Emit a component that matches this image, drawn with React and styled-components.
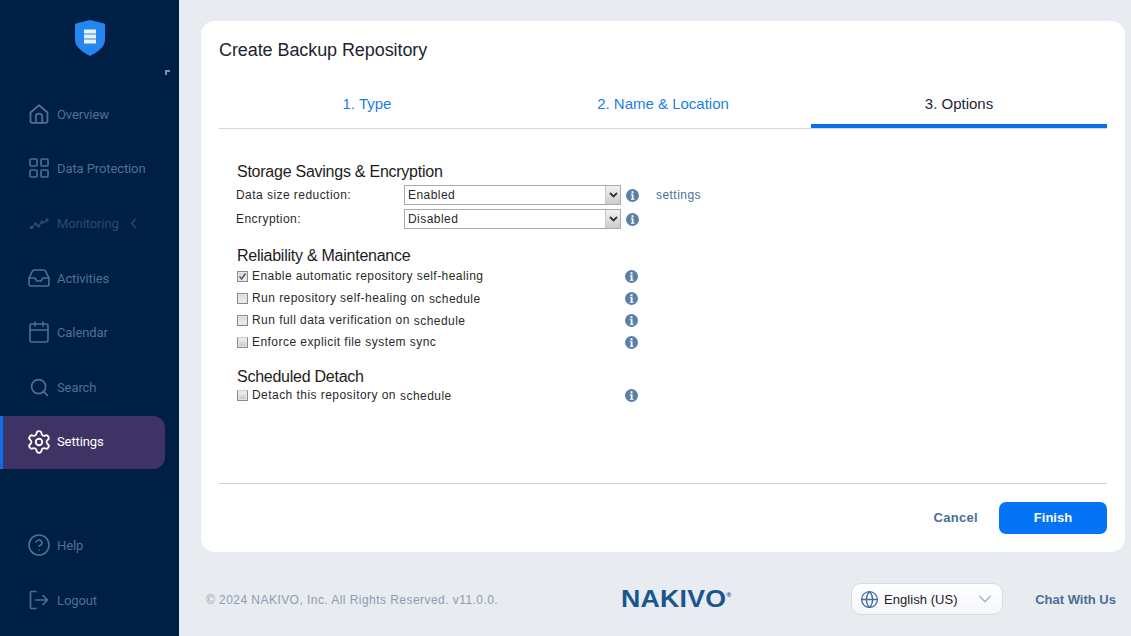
import React from 'react';
import styled, { createGlobalStyle } from 'styled-components';
import { LayoutGrid, Inbox, Calendar, Search, Settings, CircleHelp, Globe, ChevronDown, ChevronLeft } from 'lucide-react';

const GlobalStyle = createGlobalStyle`
  html, body { margin: 0; padding: 0; height: 100%; overflow: hidden; }
  body { background: #e8ebf0; font-family: "Liberation Sans", Arial, sans-serif; }
`;

const Page = styled.div`
  display: flex;
  width: 1131px;
  height: 636px;
`;

const Sidebar = styled.aside`
  display: flex;
  flex-direction: column;
  width: 179px;
  flex: none;
  background: #001f45;
  font-family: Roboto, "Liberation Sans", sans-serif;
`;

const LogoBox = styled.div`
  display: flex;
  flex-direction: column;
  height: 87px;
  padding-top: 20px;
  box-sizing: border-box;
  align-items: center;
  position: relative;
`;

const CollapseMark = styled.span`
  position: absolute;
  left: 165px;
  top: 70px;
  width: 5px;
  height: 5px;
  border-top: 2px solid #7f8fa6;
  border-left: 2px solid #7f8fa6;
  box-sizing: border-box;
`;

const NavList = styled.nav`
  display: flex;
  flex-direction: column;
  width: 165px;
`;

const NavItem = styled.a`
  display: flex;
  align-items: center;
  gap: 8px;
  height: ${p => p.$h || 54}px;
  padding-left: ${p => (p.$active ? '26px' : '29px')};
  color: ${p => (p.$active ? '#ffffff' : p.$dim ? '#2b4a72' : '#4f6f98')};
  font-size: 13px;
  letter-spacing: -0.1px;
  box-sizing: border-box;
  ${p => p.$active && `
    background: #3f3366;
    border-left: 3px solid #0b6fe8;
    border-radius: 0 12px 12px 0;
    height: 53px;
    margin: 1px 0 0;
    padding-bottom: 2px;
  `}
`;

const IconSlot = styled.span`
  display: flex;
  width: 20px;
  height: 20px;
  align-items: center;
  justify-content: center;
  flex: none;
  svg { flex: none; }
`;

const MonitoringChevron = styled(ChevronLeft)`
  margin-left: -2px;
`;

const NavSpacer = styled.div`
  height: 49px;
`;

const Main = styled.main`
  display: flex;
  flex-direction: column;
  flex: 1;
  padding: 21px 6px 0 22px;
  min-width: 0;
`;

const Card = styled.section`
  display: flex;
  flex-direction: column;
  height: 531px;
  padding: 0 18px;
  background: #ffffff;
  border-radius: 14px;
  box-sizing: border-box;
`;

const Title = styled.h1`
  margin: 18px 0 0;
  font-size: 18px;
  line-height: 22px;
  font-weight: 400;
  letter-spacing: -0.08px;
  color: #1d2530;
`;

const Tabs = styled.div`
  display: grid;
  grid-template-columns: repeat(3, 1fr);
  margin-top: 16px;
  height: 51px;
  border-bottom: 1px solid #d3d6da;
`;

const Tab = styled.div`
  display: flex;
  align-items: center;
  justify-content: center;
  height: 50px;
  padding-top: 2px;
  box-sizing: border-box;
  font-size: 15px;
  color: ${p => (p.$active ? '#222a35' : '#1b7fe3')};
  ${p => p.$active && 'border-bottom: 4px solid #0b70e6; height: 51px; padding-top: 5px;'}
`;

const Body = styled.div`
  display: flex;
  flex-direction: column;
  flex: 1;
  padding: 34px 0 0 17px;
`;

const Heading = styled.h2`
  margin: ${p => p.$gap || 0}px 0 0 1px;
  font-size: 16px;
  line-height: 18px;
  font-weight: 400;
  letter-spacing: -0.25px;
  color: #1c1c1c;
`;

const FieldGroup = styled.div`
  display: flex;
  flex-direction: column;
  margin-top: 2px;
`;

const FieldRow = styled.div`
  display: flex;
  align-items: center;
  height: 24px;
  font-size: 12px;
  letter-spacing: 0.45px;
  color: #2a2a2a;
`;

const FieldLabel = styled.span`
  width: 168px;
  flex: none;
`;

const FakeSelect = styled.div`
  display: flex;
  align-items: center;
  justify-content: space-between;
  width: 217px;
  height: 20px;
  flex: none;
  box-sizing: border-box;
  border: 1px solid #ababab;
  padding-left: 3px;
  background: #fff;
`;

const SelectArrow = styled.span`
  display: flex;
  align-items: center;
  justify-content: center;
  width: 14px;
  height: 18px;
  background: linear-gradient(#f2f2f2, #cdcdcd);
  border-left: 1px solid #c8c8c8;
`;

const InfoMark = styled.svg`
  width: 13px;
  height: 13px;
  flex: none;
  margin-left: ${p => p.$left || 0}px;
`;

const LinkText = styled.a`
  margin-left: 17px;
  color: #4a6f9c;
`;

const CheckRow = styled.div`
  display: grid;
  grid-template-columns: 389px auto;
  align-items: center;
  height: 22px;
  margin-top: ${p => (p.$tight ? '-2px' : '0')};
  font-size: 12px;
  letter-spacing: 0.45px;
  color: #2a2a2a;
`;

const CheckLabel = styled.span`
  display: flex;
  align-items: center;
  gap: 4px;
`;

const Box = styled.span`
  display: flex;
  align-items: center;
  justify-content: center;
  width: 11px;
  height: 11px;
  margin-left: 1px;
  box-sizing: border-box;
  border: 1px solid #8b8b8b;
  border-top-color: ${p => (p.$faded ? '#d4d4d4' : '#8b8b8b')};
  background: ${p => (p.$faded ? 'linear-gradient(#f4f4f4, #c4c4c4)' : 'linear-gradient(#d8d8d8, #f1f1f1)')};
  box-shadow: inset 0 0 0 1px #e6e6e6;
  flex: none;
`;

const ScheduleWord = styled.span`
  display: inline-block;
  margin-left: 4px;
  vertical-align: -1px;
`;

const Actions = styled.div`
  display: flex;
  align-items: flex-start;
  justify-content: flex-end;
  gap: 21px;
  height: 50px;
  border-top: 1px solid #cfd2d6;
  padding-top: 18px;
`;

const CancelLink = styled.a`
  margin-top: 8px;
  font-size: 13px;
  font-weight: 700;
  color: #4a6f9c;
  letter-spacing: 0.3px;
`;

const FinishButton = styled.button`
  width: 108px;
  height: 32px;
  border: 0;
  border-radius: 7px;
  padding: 0 0 2px;
  background: #0473f5;
  color: #fff;
  font: 700 13px "Liberation Sans", sans-serif;
`;

const Footer = styled.footer`
  display: flex;
  align-items: center;
  height: 84px;
  padding: 10px 9px 0 5px;
  box-sizing: border-box;
  font-size: 12px;
`;

const Copyright = styled.span`
  width: 415px;
  flex: none;
  margin-top: 2px;
  color: #8d9db2;
  letter-spacing: 0.45px;
`;

const Brand = styled.span`
  display: block;
  width: 230px;
  flex: none;
  font-size: 23px;
  font-weight: 700;
  color: #17568f;
  letter-spacing: 0.2px;
  transform: scaleX(1.16);
  transform-origin: left center;
  white-space: nowrap;
  sup { font-size: 6px; letter-spacing: 0; vertical-align: 10px; line-height: 0; }
`;

const Language = styled.div`
  display: flex;
  align-items: center;
  width: 152px;
  height: 32px;
  flex: none;
  box-sizing: border-box;
  padding: 0 6px 0 8px;
  gap: 5px;
  background: linear-gradient(#ffffff, #f4f6fa);
  border: 1px solid #d7dce4;
  border-radius: 10px;
  font-size: 13px;
  letter-spacing: 0.05px;
  color: #222;
`;

const LanguageName = styled.span`
  flex: 1;
`;

const ChatLink = styled.a`
  margin-left: auto;
  font-size: 13px;
  font-weight: 700;
  color: #4a6f9c;
`;

function HomeIcon() {
  return (
    <svg width="20" height="20" viewBox="0 0 20 20" fill="none" stroke="#4f6f98" strokeWidth="1.8" strokeLinejoin="round">
      <path d="M1.500 8.500 10 1.200l8.500 7.300V17a1.800 1.800 0 0 1-1.800 1.800H3.300A1.800 1.800 0 0 1 1.500 17z" />
      <path d="M6.800 18.800v-6a3.200 3.200 0 0 1 6.400 0v6" />
    </svg>
  );
}

function TrendIcon() {
  return (
    <svg width="20" height="20" viewBox="0 0 20 20" fill="none" stroke="#2b4a72" strokeWidth="1.2">
      <path d="M2.500 14.500 6.500 11l3 2 3.500-4 2 1 3-3" />
      <circle cx="2.500" cy="14.500" r="1.200" fill="#2b4a72" />
      <circle cx="6.500" cy="11" r="1.100" fill="#2b4a72" />
      <circle cx="9.500" cy="13" r="1.100" fill="#2b4a72" />
      <circle cx="13" cy="9" r="1.100" fill="#2b4a72" />
      <circle cx="18" cy="7" r="1.200" fill="#2b4a72" />
    </svg>
  );
}

function ExitIcon() {
  return (
    <svg width="20" height="20" viewBox="0 0 20 20" fill="none" stroke="#4f6f98" strokeWidth="1.6" strokeLinecap="round" strokeLinejoin="round">
      <path d="M7 1.500H2.500a1 1 0 0 0-1 1v15a1 1 0 0 0 1 1H7" />
      <path d="M6.500 10H18.500M14 5.500l4.500 4.500-4.500 4.500" />
    </svg>
  );
}

function Info({ left }) {
  return (
    <InfoMark $left={left} viewBox="0 0 13 13">
      <circle cx="6.500" cy="6.500" r="6.500" fill="#5b80a8" />
      <rect x="5.500" y="2.300" width="2" height="2" fill="#fff" />
      <path d="M4.800 5.300h2.700v4.400h1v1H4.800v-1h1V6.300h-1z" fill="#fff" />
    </InfoMark>
  );
}

const navItems = [
  { label: 'Overview', h: 54, icon: <HomeIcon /> },
  { label: 'Data Protection', h: 54, icon: <LayoutGrid size={24} strokeWidth={1.6} /> },
  { label: 'Monitoring', h: 56, icon: <TrendIcon />, dim: true, chevron: true },
  { label: 'Activities', h: 54, icon: <Inbox size={24} strokeWidth={1.6} /> },
  { label: 'Calendar', h: 54, icon: <Calendar size={24} strokeWidth={1.6} /> },
  { label: 'Search', h: 56, icon: <Search size={21} strokeWidth={1.8} /> },
  { label: 'Settings', icon: <Settings size={26} strokeWidth={1.7} />, active: true },
];

function Check({ checked, faded, tight, children }) {
  return (
    <CheckRow $tight={tight}>
      <CheckLabel>
        <Box $faded={faded}>
          {checked && (
            <svg width="9" height="9" viewBox="0 0 9 9" fill="none" stroke="#4a5a78" strokeWidth="1.6">
              <path d="M1.500 4.500 3.600 7 7.500 1.500" />
            </svg>
          )}
        </Box>
        <span>{children}</span>
      </CheckLabel>
      <Info />
    </CheckRow>
  );
}

function Dropdown({ value }) {
  return (
    <FakeSelect>
      {value}
      <SelectArrow>
        <svg width="9" height="6" viewBox="0 0 9 6" fill="none" stroke="#333" strokeWidth="1.8">
          <path d="M1 1l3.500 3.500L8 1" />
        </svg>
      </SelectArrow>
    </FakeSelect>
  );
}

export default function App() {
  return (
    <Page>
      <GlobalStyle />
      <Sidebar>
        <LogoBox>
          <svg width="30" height="36" viewBox="0 0 30 36">
            <path d="M15 0 29 3.500c.6.2 1 .7 1 1.300V20c0 7-8 12.500-15 16C8 32.500 0 27 0 20V4.800c0-.6.4-1.100 1-1.300z" fill="#2586f2" />
            <rect x="9" y="9.500" width="12" height="4" fill="#e8f2ff" />
            <rect x="9" y="14.500" width="12" height="4" fill="#e8f2ff" />
            <rect x="9" y="19.500" width="12" height="4" fill="#e8f2ff" />
          </svg>
          <CollapseMark />
        </LogoBox>
        <NavList>
          {navItems.map(item => (
            <NavItem key={item.label} $h={item.h} $active={item.active} $dim={item.dim}>
              <IconSlot>{item.icon}</IconSlot>
              {item.label}
              {item.chevron && <MonitoringChevron size={17} strokeWidth={1.6} />}
            </NavItem>
          ))}
          <NavSpacer />
          <NavItem>
            <IconSlot><CircleHelp size={24} strokeWidth={1.6} /></IconSlot>
            Help
          </NavItem>
          <NavItem $h={56}>
            <IconSlot><ExitIcon /></IconSlot>
            Logout
          </NavItem>
        </NavList>
      </Sidebar>
      <Main>
        <Card>
          <Title>Create Backup Repository</Title>
          <Tabs>
            <Tab>1. Type</Tab>
            <Tab>2. Name &amp; Location</Tab>
            <Tab $active>3. Options</Tab>
          </Tabs>
          <Body>
            <Heading>Storage Savings &amp; Encryption</Heading>
            <FieldGroup>
              <FieldRow>
                <FieldLabel>Data size reduction:</FieldLabel>
                <Dropdown value="Enabled" />
                <Info left={5} />
                <LinkText>settings</LinkText>
              </FieldRow>
              <FieldRow>
                <FieldLabel>Encryption:</FieldLabel>
                <Dropdown value="Disabled" />
                <Info left={5} />
              </FieldRow>
            </FieldGroup>
            <Heading $gap={16}>Reliability &amp; Maintenance</Heading>
            <Check checked>Enable automatic repository self-healing</Check>
            <Check>Run repository self-healing on<ScheduleWord>schedule</ScheduleWord></Check>
            <Check>Run full data verification on<ScheduleWord>schedule</ScheduleWord></Check>
            <Check faded>Enforce explicit file system sync</Check>
            <Heading $gap={15}>Scheduled Detach</Heading>
            <Check faded tight>Detach this repository on<ScheduleWord>schedule</ScheduleWord></Check>
          </Body>
          <Actions>
            <CancelLink>Cancel</CancelLink>
            <FinishButton>Finish</FinishButton>
          </Actions>
        </Card>
        <Footer>
          <Copyright>© 2024 NAKIVO, Inc. All Rights Reserved. v11.0.0.</Copyright>
          <Brand>NAKIVO<sup>®</sup></Brand>
          <Language>
            <Globe size={19} color="#3f6a9c" strokeWidth={1.6} />
            <LanguageName>English (US)</LanguageName>
            <ChevronDown size={22} color="#a6adb8" strokeWidth={1.3} />
          </Language>
          <ChatLink>Chat With Us</ChatLink>
        </Footer>
      </Main>
    </Page>
  );
}
